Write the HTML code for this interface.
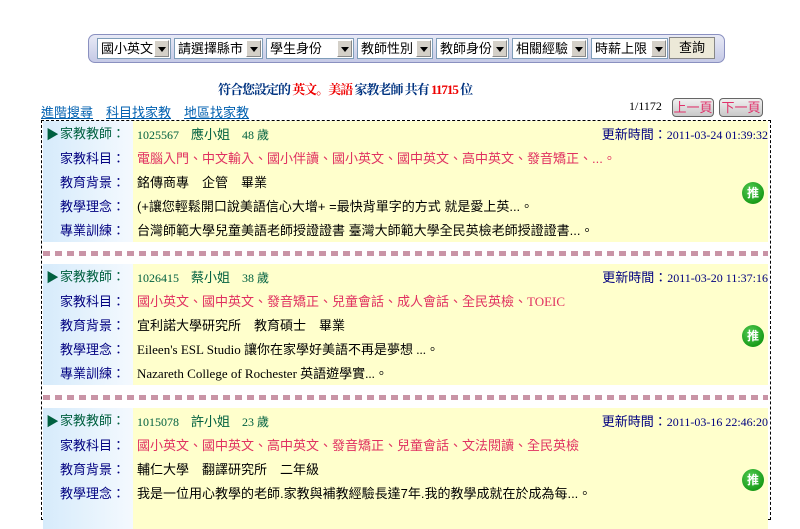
<!DOCTYPE html>
<html><head><meta charset="utf-8"><style>
*{margin:0;padding:0;box-sizing:border-box}
body{width:800px;height:507px;overflow:hidden;background:#fff;font-family:"Liberation Sans","Noto Sans CJK TC",sans-serif;font-size:13px;position:relative}
.a{position:absolute;white-space:nowrap}
.bar{position:absolute;left:88px;top:34px;width:637px;height:29px;border-radius:7px;background:linear-gradient(#e8eaf6,#c5c9e6);border:1px solid #8a90c0}
.sel{position:absolute;top:38px;height:21px;border:1px solid #7f9db9;background:#fff;font-size:13px;line-height:19px;padding-left:3px;color:#000}
.sel i{position:absolute;right:1px;top:1px;width:15px;height:17px;background:#d4d0c8;border:1px solid #888;border-top-color:#fff;border-left-color:#fff}
.sel i:after{content:"";position:absolute;left:3px;top:6px;border:4px solid transparent;border-top:5px solid #000}
.btn{position:absolute;left:669px;top:37px;width:46px;height:22px;background:#ece9d8;border:1px solid #888;text-align:center;line-height:20px;font-size:13px}
.box{position:absolute;left:41px;top:120px;width:730px;height:400px;border:1px dashed #000}
.blk{position:absolute;left:43px;width:725px;height:121px}
.lab{position:absolute;left:0;top:0;width:90px;height:121px;background:linear-gradient(90deg,#d6ebfb,#f4f9fe)}
.con{position:absolute;left:90px;top:0;width:635px;height:121px;background:#ffffcc}
.row{position:absolute;left:17px;color:#000080;font-size:13px}
.c{position:absolute;left:94px;font-size:13px;color:#000}
.sep{position:absolute;left:43px;width:725px;height:5px;background:repeating-linear-gradient(90deg,#c994a6 0 7px,transparent 7px 12px)}
.tui{position:absolute;right:4px;width:22px;height:22px;border-radius:50%;background:radial-gradient(circle at 40% 35%,#5c5,#080);color:#fff;font-size:12px;font-weight:bold;text-align:center;line-height:22px}
.pg{position:absolute;top:98px;height:19px;border:1px solid #666;border-radius:4px;background:linear-gradient(#f0f0f0,#c8c8c8);color:#e0306a;font-size:13px;line-height:17px;text-align:center}
</style></head><body>
<div class="bar"></div>
<div class="sel" style="left:97px;width:74px">國小英文<i></i></div>
<div class="sel" style="left:174px;width:89px">請選擇縣市<i></i></div>
<div class="sel" style="left:266px;width:88px">學生身份<i></i></div>
<div class="sel" style="left:357px;width:76px">教師性別<i></i></div>
<div class="sel" style="left:436px;width:73px">教師身份<i></i></div>
<div class="sel" style="left:512px;width:76px">相關經驗<i></i></div>
<div class="sel" style="left:591px;width:77px">時薪上限<i></i></div>
<div class="btn">查詢</div>

<div class="a" style="left:218px;top:79px;font-weight:bold;color:#003380;font-size:13px;letter-spacing:-1px;font-family:'Liberation Serif','Noto Serif CJK SC',serif">符合您設定的 <span style="color:#e00">英文。美語</span> 家教老師 共有 <span style="color:#e00">11715</span> 位</div>
<div class="a" style="left:41px;top:102px;color:#0060b0;text-decoration:underline;font-size:13px">進階搜尋</div>
<div class="a" style="left:106px;top:102px;color:#0060b0;text-decoration:underline;font-size:13px">科目找家教</div>
<div class="a" style="left:184px;top:102px;color:#0060b0;text-decoration:underline;font-size:13px">地區找家教</div>
<div class="a" style="left:629px;top:99px;font-family:'Liberation Serif',serif;font-size:12px">1/1172</div>
<div class="pg" style="left:672px;width:42px">上一頁</div>
<div class="pg" style="left:719px;width:44px">下一頁</div>

<div class="box"></div>

<div class="blk" style="top:121px"><div class="lab"></div><div class="con"></div>
<div class="a" style="left:3px;top:3px;color:#006040;font-size:13px">▶</div>
<div class="row" style="top:2px;color:#006040">家教教師：</div>
<div class="row" style="top:27px">家教科目：</div>
<div class="row" style="top:51px">教育背景：</div>
<div class="row" style="top:75px">教學理念：</div>
<div class="row" style="top:99px">專業訓練：</div>
<div class="c" style="top:3px;color:#006040;font-family:'Liberation Serif','Noto Sans CJK TC',serif;font-size:12px">1025567 &nbsp;&nbsp;&nbsp;<span style="font-size:13px">應小姐</span> &nbsp;&nbsp;&nbsp;48 歲</div>
<div class="c" style="top:27px;color:#e03060">電腦入門、中文輸入、國小伴讀、國小英文、國中英文、高中英文、發音矯正、...。</div>
<div class="c" style="top:51px">銘傳商專　企管　畢業</div>
<div class="c" style="top:75px">(+讓您輕鬆開口說美語信心大增+ =最快背單字的方式 就是愛上英...。</div>
<div class="c" style="top:99px">台灣師範大學兒童美語老師授證證書 臺灣大師範大學全民英檢老師授證證書...。</div>
<div class="a" style="right:0;top:3px;color:#000080;font-size:13px">更新時間：<span style="font-family:'Liberation Serif',serif;font-size:12px">2011-03-24 01:39:32</span></div>
<div class="tui" style="top:61px">推</div>
</div>
<div class="sep" style="top:251px"></div>

<div class="blk" style="top:264px"><div class="lab"></div><div class="con"></div>
<div class="a" style="left:3px;top:3px;color:#006040;font-size:13px">▶</div>
<div class="row" style="top:2px;color:#006040">家教教師：</div>
<div class="row" style="top:27px">家教科目：</div>
<div class="row" style="top:51px">教育背景：</div>
<div class="row" style="top:75px">教學理念：</div>
<div class="row" style="top:99px">專業訓練：</div>
<div class="c" style="top:3px;color:#006040;font-family:'Liberation Serif','Noto Sans CJK TC',serif;font-size:12px">1026415 &nbsp;&nbsp;&nbsp;<span style="font-size:13px">蔡小姐</span> &nbsp;&nbsp;&nbsp;38 歲</div>
<div class="c" style="top:27px;color:#e03060">國小英文、國中英文、發音矯正、兒童會話、成人會話、全民英檢、<span style="font-family:'Liberation Serif',serif">TOEIC</span></div>
<div class="c" style="top:51px">宜利諾大學研究所　教育碩士　畢業</div>
<div class="c" style="top:75px;font-family:'Liberation Serif','Noto Sans CJK TC',serif">Eileen's ESL Studio 讓你在家學好美語不再是夢想 ...。</div>
<div class="c" style="top:99px;font-family:'Liberation Serif','Noto Sans CJK TC',serif">Nazareth College of Rochester 英語遊學實...。</div>
<div class="a" style="right:0;top:3px;color:#000080;font-size:13px">更新時間：<span style="font-family:'Liberation Serif',serif;font-size:12px">2011-03-20 11:37:16</span></div>
<div class="tui" style="top:61px">推</div>
</div>
<div class="sep" style="top:395px"></div>

<div class="blk" style="top:408px"><div class="lab"></div><div class="con"></div>
<div class="a" style="left:3px;top:3px;color:#006040;font-size:13px">▶</div>
<div class="row" style="top:2px;color:#006040">家教教師：</div>
<div class="row" style="top:27px">家教科目：</div>
<div class="row" style="top:51px">教育背景：</div>
<div class="row" style="top:75px">教學理念：</div>
<div class="c" style="top:3px;color:#006040;font-family:'Liberation Serif','Noto Sans CJK TC',serif;font-size:12px">1015078 &nbsp;&nbsp;&nbsp;<span style="font-size:13px">許小姐</span> &nbsp;&nbsp;&nbsp;23 歲</div>
<div class="c" style="top:27px;color:#e03060">國小英文、國中英文、高中英文、發音矯正、兒童會話、文法閱讀、全民英檢</div>
<div class="c" style="top:51px">輔仁大學　翻譯研究所　二年級</div>
<div class="c" style="top:75px">我是一位用心教學的老師.家教與補教經驗長達7年.我的教學成就在於成為每...。</div>
<div class="a" style="right:0;top:3px;color:#000080;font-size:13px">更新時間：<span style="font-family:'Liberation Serif',serif;font-size:12px">2011-03-16 22:46:20</span></div>
<div class="tui" style="top:61px">推</div>
</div>
</body></html>
